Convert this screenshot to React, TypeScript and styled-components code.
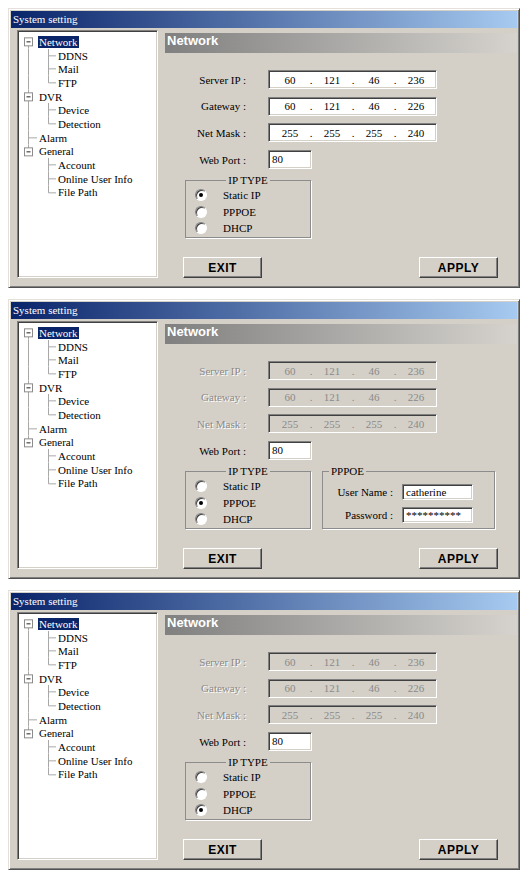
import React from "react";
import styled, { createGlobalStyle } from "styled-components";

type IpType = "static" | "pppoe" | "dhcp";

type Node = {
  label: string;
  level: 0 | 1;
  box?: boolean;
  first?: boolean;
  last?: boolean;
  parentLast?: boolean;
  selected?: boolean;
};

const tree: Node[] = [
  { label: "Network", level: 0, box: true, first: true, selected: true },
  { label: "DDNS", level: 1 },
  { label: "Mail", level: 1 },
  { label: "FTP", level: 1, last: true },
  { label: "DVR", level: 0, box: true },
  { label: "Device", level: 1 },
  { label: "Detection", level: 1, last: true },
  { label: "Alarm", level: 0 },
  { label: "General", level: 0, box: true, last: true },
  { label: "Account", level: 1, parentLast: true },
  { label: "Online User Info", level: 1, parentLast: true },
  { label: "File Path", level: 1, parentLast: true, last: true },
];

const ROW = 13.7;
const MID = ROW / 2;
const LINE = "#a8a8a8";

const GlobalStyle = createGlobalStyle`
  body {
    margin: 0;
    background: #fff;
    font-family: "Liberation Serif", "Times New Roman", serif;
    font-size: 11px;
    color: #000;
  }
`;

const Gutter = ({ node }: { node: Node }) => {
  if (node.level === 0) {
    return (
      <svg width={20} height={ROW}>
        <line x1={10.5} x2={10.5} y1={node.first ? MID : 0} y2={node.last ? MID : ROW} stroke={LINE} />
        {node.box ? (
          <>
            <rect x={6.5} y={MID - 4} width={8} height={8} fill="#fff" stroke="#8c8c8c" />
            <line x1={8.5} x2={12.5} y1={MID} y2={MID} stroke="#222" />
          </>
        ) : (
          <line x1={10.5} x2={19} y1={MID} y2={MID} stroke={LINE} />
        )}
      </svg>
    );
  }
  return (
    <svg width={39} height={ROW}>
      {!node.parentLast && <line x1={10.5} x2={10.5} y1={0} y2={ROW} stroke={LINE} />}
      <line x1={30.5} x2={30.5} y1={0} y2={node.last ? MID : ROW} stroke={LINE} />
      <line x1={30.5} x2={38} y1={MID} y2={MID} stroke={LINE} />
    </svg>
  );
};

const IpField = ({ value, off }: { value: string; off: boolean }) => {
  const parts = value.split(".");
  return (
    <IpBox $off={off}>
      {parts.map((p, i) => (
        <React.Fragment key={i}>
          {i > 0 && <Dot>.</Dot>}
          <Octet>{p}</Octet>
        </React.Fragment>
      ))}
    </IpBox>
  );
};

const SettingWindow = ({ mode }: { mode: IpType }) => {
  const off = mode !== "static";
  const fields = [
    ["Server IP :", "60.121.46.236"],
    ["Gateway :", "60.121.46.226"],
    ["Net Mask :", "255.255.255.240"],
  ];
  const types: [IpType, string][] = [
    ["static", "Static IP"],
    ["pppoe", "PPPOE"],
    ["dhcp", "DHCP"],
  ];

  return (
    <Window>
      <TitleBar>System setting</TitleBar>
      <Body>
        <TreePanel>
          {tree.map((n) => (
            <TreeRow key={n.label}>
              <Gutter node={n} />
              <TreeLabel $selected={!!n.selected}>{n.label}</TreeLabel>
            </TreeRow>
          ))}
        </TreePanel>
        <Panel>
          <Header>Network</Header>
          <Form>
            {fields.map(([label, value]) => (
              <FieldRow key={label}>
                <FieldLabel $off={off}>{label}</FieldLabel>
                <IpField value={value} off={off} />
              </FieldRow>
            ))}
            <FieldRow>
              <FieldLabel $off={false}>Web Port :</FieldLabel>
              <PortBox>80</PortBox>
            </FieldRow>
          </Form>
          <Groups>
            <Group $width={126}>
              <Legend $centered>IP TYPE</Legend>
              <RadioList>
                {types.map(([key, label]) => (
                  <RadioRow key={key}>
                    <Radio $on={mode === key} />
                    <span>{label}</span>
                  </RadioRow>
                ))}
              </RadioList>
            </Group>
            {mode === "pppoe" && (
              <Group $width={173}>
                <Legend>PPPOE</Legend>
                <LoginList>
                  <LoginRow>
                    <LoginLabel>User Name :</LoginLabel>
                    <TextBox>catherine</TextBox>
                  </LoginRow>
                  <LoginRow>
                    <LoginLabel>Password :</LoginLabel>
                    <TextBox>**********</TextBox>
                  </LoginRow>
                </LoginList>
              </Group>
            )}
          </Groups>
          <ButtonRow>
            <Button>EXIT</Button>
            <Button>APPLY</Button>
          </ButtonRow>
        </Panel>
      </Body>
    </Window>
  );
};

const App = () => {
  return (
    <>
      <GlobalStyle />
      <Page>
        <SettingWindow mode="static" />
        <SettingWindow mode="pppoe" />
        <SettingWindow mode="dhcp" />
      </Page>
    </>
  );
};

export default App;

const Page = styled.div`
  display: flex;
  flex-direction: column;
  gap: 11px;
  padding: 8px 0 0 8px;
`;

const Window = styled.div`
  width: 512px;
  height: 280px;
  box-sizing: border-box;
  display: flex;
  flex-direction: column;
  padding: 2px;
  background: #d4d0c8;
  border: 1px solid;
  border-color: #e4e1dc #505050 #505050 #e4e1dc;
  box-shadow: inset 1px 1px #fff, inset -1px -1px #808080;
`;

const TitleBar = styled.div`
  height: 17px;
  line-height: 17px;
  padding-left: 2px;
  color: #fff;
  font-size: 11px;
  background: linear-gradient(to right, #0a246a, #a6caf0);
`;

const Body = styled.div`
  flex: 1;
  display: flex;
  padding: 2px 0 0 6px;
  min-height: 0;
`;

const TreePanel = styled.div`
  width: 141px;
  height: 248px;
  box-sizing: border-box;
  padding-top: 4px;
  background: #fff;
  border: 1px solid;
  border-color: #808080 #fff #fff #808080;
  box-shadow: inset 1px 1px #404040, inset -1px -1px #d4d0c8;
`;

const TreeRow = styled.div`
  display: flex;
  align-items: center;
  height: ${ROW}px;
  line-height: ${ROW}px;
  white-space: nowrap;
  svg {
    flex: none;
    display: block;
  }
`;

const TreeLabel = styled.span<{ $selected: boolean }>`
  padding: 0 1px;
  line-height: 12px;
  background: ${(p) => (p.$selected ? "#0a246a" : "transparent")};
  color: ${(p) => (p.$selected ? "#fff" : "#000")};
`;

const Panel = styled.div`
  flex: 1;
  display: flex;
  flex-direction: column;
  margin: 3px 0 0 7px;
`;

const Header = styled.div`
  height: 20px;
  line-height: 20px;
  padding-left: 2px;
  color: #fff;
  font: bold 13px "Liberation Sans", Arial, sans-serif;
  background: linear-gradient(to right, #808080, #d6d3ce);
`;

const Form = styled.div`
  display: flex;
  flex-direction: column;
  gap: 7.7px;
  margin-top: 17px;
`;

const FieldRow = styled.div`
  display: flex;
  align-items: center;
  height: 19px;
`;

const FieldLabel = styled.span<{ $off: boolean }>`
  width: 81px;
  margin-right: 22px;
  text-align: right;
  color: ${(p) => (p.$off ? "#8a8a8a" : "#000")};
  text-shadow: ${(p) => (p.$off ? "1px 1px #fff" : "none")};
`;

const sunken = `
  box-sizing: border-box;
  border: 1px solid;
  border-color: #808080 #fff #fff #808080;
  box-shadow: inset 1px 1px #404040, inset -1px -1px #d4d0c8;
`;

const IpBox = styled.div<{ $off: boolean }>`
  ${sunken}
  width: 169px;
  height: 19px;
  display: flex;
  align-items: center;
  padding-left: 3px;
  background: ${(p) => (p.$off ? "#d4d0c8" : "#fff")};
  color: ${(p) => (p.$off ? "#8a8a8a" : "#000")};
`;

const Octet = styled.span`
  width: 36px;
  text-align: center;
`;

const Dot = styled.span`
  width: 6px;
  text-align: center;
`;

const PortBox = styled.div`
  ${sunken}
  width: 44px;
  height: 19px;
  line-height: 17px;
  padding-left: 3px;
  background: #fff;
`;

const Groups = styled.div`
  display: flex;
  gap: 11px;
  margin: 5px 0 0 20px;
`;

const Group = styled.fieldset<{ $width: number }>`
  width: ${(p) => p.$width}px;
  height: 64px;
  box-sizing: border-box;
  margin: 0;
  padding: 0;
  min-width: 0;
  border: 1px solid #8c8c8c;
  box-shadow: 1px 1px #fff;
`;

const Legend = styled.legend<{ $centered?: boolean }>`
  padding: 0 2px;
  line-height: 12px;
  margin: ${(p) => (p.$centered ? "0 auto" : "0 0 0 6px")};
`;

const RadioList = styled.div`
  display: flex;
  flex-direction: column;
  padding: 1px 0 0 9px;
`;

const RadioRow = styled.div`
  display: flex;
  align-items: center;
  gap: 16px;
  height: 16.5px;
`;

const Radio = styled.span<{ $on: boolean }>`
  width: 12px;
  height: 12px;
  box-sizing: border-box;
  border-radius: 50%;
  border: 1px solid;
  border-color: #808080 #fff #fff #808080;
  box-shadow: inset 1px 1px #404040;
  background: #fff;
  display: flex;
  align-items: center;
  justify-content: center;
  &::after {
    content: "";
    width: 4px;
    height: 4px;
    border-radius: 50%;
    background: #000;
    display: ${(p) => (p.$on ? "block" : "none")};
  }
`;

const LoginList = styled.div`
  display: flex;
  flex-direction: column;
  gap: 7px;
  padding-top: 7px;
`;

const LoginRow = styled.div`
  display: flex;
  align-items: center;
  height: 16px;
`;

const LoginLabel = styled.span`
  width: 70px;
  margin-right: 9px;
  text-align: right;
`;

const TextBox = styled.div`
  ${sunken}
  width: 71px;
  height: 16px;
  line-height: 14px;
  padding-left: 3px;
  background: #fff;
`;

const ButtonRow = styled.div`
  display: flex;
  justify-content: space-between;
  margin-top: auto;
  margin-bottom: 7px;
  padding: 0 19px 0 18px;
`;

const Button = styled.button`
  width: 79px;
  height: 21px;
  padding: 0;
  background: #d4d0c8;
  border: 1px solid;
  border-color: #fff #404040 #404040 #fff;
  box-shadow: inset -1px -1px #808080;
  color: #000;
  font: bold 12px "Liberation Sans", Arial, sans-serif;
  letter-spacing: 0.5px;
`;
